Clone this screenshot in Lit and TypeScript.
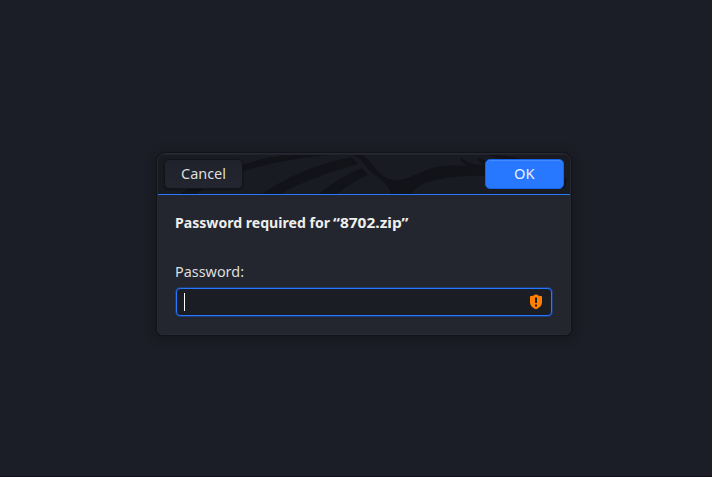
import { LitElement, html, css } from "lit";
import { customElement } from "lit/decorators.js";

@customElement("app-root")
export class AppRoot extends LitElement {
  static styles = css`
    :host {
      display: flex;
      box-sizing: border-box;
      width: 712px;
      height: 477px;
      padding: 153px 141px 141px 157px;
      overflow: hidden;
      background: #1b1e26;
      border-bottom: 1px solid #150f1c;
      font-family: "Noto Sans", "Open Sans", sans-serif;
      font-size: 14px;
      line-height: 20px;
      color: #eeeeec;
    }
    .dialog {
      box-sizing: border-box;
      width: 414px;
      height: 182px;
      border: 1px solid #262933;
      border-radius: 8px 8px 5px 5px;
      background: #23262f;
      box-shadow: 0 0 0 1px #131419, 0 2px 10px 2px rgba(20, 18, 18, 0.5);
    }
    .header {
      display: grid;
      grid-template-columns: 79px 79px;
      justify-content: space-between;
      box-sizing: border-box;
      height: 41px;
      padding: 5px 6px 5px 6px;
      border-bottom: 1px solid #2777ff;
      border-radius: 7px 7px 0 0;
      background: linear-gradient(#1a1b22, #191b22);
      position: relative;
      overflow: hidden;
    }
    .art {
      position: absolute;
      inset: 0;
      width: 412px;
      height: 40px;
    }
    .btn {
      position: relative;
      box-sizing: border-box;
      height: 30px;
      padding: 0;
      border: 1px solid #131419;
      border-radius: 5px;
      background: linear-gradient(#20222b, #23262f);
      font: inherit;
      box-shadow: 0 1px 2px rgba(0, 0, 0, 0.3);
    }
    .primary {
      border-color: #1764e8;
      background: #2777ff;
      box-shadow: inset 0 1px #438aff;
    }
    .body {
      display: flex;
      flex-direction: column;
      padding: 18px 18px 0 17px;
    }
    .text {
      display: block;
      height: 20px;
      width: 300px;
      overflow: visible;
      fill: #dededd;
    }
    .btn .text {
      width: 77px;
      overflow: hidden;
    }
    .primary .text {
      fill: #eaf1ff;
    }
    .title {
      font-weight: 700;
      fill: #eeeeec;
    }
    .field {
      margin-top: 29px;
    }
    .entry {
      display: flex;
      align-items: center;
      justify-content: space-between;
      box-sizing: border-box;
      height: 28px;
      margin: 6px 0 0 1px;
      padding: 0 9px 0 7px;
      border: 1px solid #2777ff;
      border-radius: 4px;
      background: #1b1d25;
      box-shadow: 0 0 0 1px #1c3a76;
    }
    .caret {
      width: 1px;
      height: 18px;
      background: #fff;
    }
    .shield {
      width: 12px;
      height: 16px;
    }
  `;

  render() {
    return html`
      <div class="dialog">
        <div class="header">
          <svg class="art" viewBox="158 154 412 40" fill="#121318">
            <path d="M180 194C200 180 246 160 284 155H330C300 157 256 165 228 177C212 183 204 188 196 194Z" />
            <path d="M262 194C285 178 315 164 352 157L358 164C330 172 303 181 281 194Z" />
            <path d="M319 194C331 184 346 174 362 168L368 175C356 180 346 187 337 194Z" />
            <path d="M353 155H363C371 161 376 171 385 177C392 181 401 181 410 177C420 173 430 167 444 166C452 165 460 166 468 166C463 164 461 161 460 157C465 162 474 165 484 165C480 163 478 160 478 157C486 163 500 163 510 168C530 174 550 176 567 179L565 189C540 181 510 178 485 176C462 175 440 178 425 183C418 186 414 190 411 194H391C390 183 372 175 366 166C362 160 357 157 353 155Z" />
            <path d="M486 155C505 155 520 157 532 162H510C500 158 493 157 486 155Z" />
            <path d="M158 154.500H570" stroke="#22242c" fill="none" />
          </svg>
          <button class="btn">
            <svg class="text" viewBox="0 0 77 20"><text x="16" y="15" textLength="45" lengthAdjust="spacingAndGlyphs">Cancel</text></svg>
          </button>
          <button class="btn primary">
            <svg class="text" viewBox="0 0 77 20"><text x="28" y="15" textLength="20.5" lengthAdjust="spacingAndGlyphs">OK</text></svg>
          </button>
        </div>
        <div class="body">
          <svg class="text title" viewBox="0 0 300 20">
            <text x="0" y="15" textLength="155" lengthAdjust="spacingAndGlyphs">Password required for</text>
            <text x="158" y="15" textLength="75.500" lengthAdjust="spacingAndGlyphs">“8702.zip”</text>
          </svg>
          <svg class="text field" viewBox="0 0 300 20"><text x="0" y="15" textLength="69" lengthAdjust="spacingAndGlyphs">Password:</text></svg>
          <div class="entry">
            <span class="caret"></span>
            <svg class="shield" viewBox="0 0 12 16">
              <path fill="#ff8000" d="M6 0.300C8 1.500 10 2.200 12 2.200V8C12 11.500 9.500 14 6 15.300C2.500 14 0 11.500 0 8V2.200C2 2.200 4 1.500 6 0.300Z" />
              <path fill="#1c1f27" d="M5 3.500H7V9H5ZM5 10.500H7V12.500H5Z" />
            </svg>
          </div>
        </div>
      </div>
    `;
  }
}
